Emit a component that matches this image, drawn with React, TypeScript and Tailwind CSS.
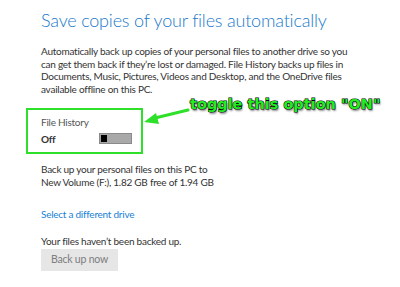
import React from 'react'

// ============================================================================
// FILE HISTORY - Save copies of your files automatically
// ============================================================================

const body = "font-['Lato',sans-serif] text-[10px] leading-[12.5px] tracking-[-0.25px]"

export default function App() {
  return (
    <div className="relative w-[400px] h-[287px] bg-white overflow-hidden">
      <div className="pl-[41px] pt-[8px] text-[#333333]">
        <h1 className="font-['Lato',sans-serif] font-light text-[18px] leading-[24px] tracking-[-0.2px] text-[#1979ca] whitespace-nowrap">
          Save copies of your files automatically
        </h1>

        <div className={`${body} mt-[13px] whitespace-nowrap`}>
          <p>Automatically back up copies of your personal files to another drive so you</p>
          <p>can get them back if they’re lost or damaged. File History backs up files in</p>
          <p>Documents, Music, Pictures, Videos and Desktop, and the OneDrive files</p>
          <p>available offline on this PC.</p>
        </div>

        <div className="ml-[-15px] mt-[13px] w-[117px] h-[46px] border-2 border-[#2fe02a] pl-[13px] pt-[6px]">
          <p className={`${body} text-[#555555]`}>File History</p>
          <div className="flex items-center mt-[4px]">
            <span className={`${body} font-bold w-[58px]`}>Off</span>
            <div className="flex w-[33px] h-[11px] border border-[#8a8a8a] bg-[#a9a9a9] p-px">
              <div className="w-[6px] h-full bg-black" />
            </div>
          </div>
        </div>

        <div className={`${body} mt-[9px] whitespace-nowrap`}>
          <p>Back up your personal files on this PC to</p>
          <p>New Volume (F:), 1.82 GB free of 1.94 GB</p>
        </div>

        <p className={`${body} mt-[20px] text-[#1a7fd6]`}>Select a different drive</p>

        <p className={`${body} mt-[14px]`}>Your files haven’t been backed up.</p>

        <div className="mt-[2px] w-[77px] h-[22px] bg-[#e6e6e6] flex items-center justify-center font-['Lato',sans-serif] text-[10.5px] tracking-[-0.2px] text-[#7d7d7d]">
          Back up now
        </div>
      </div>

      {/* annotation overlay */}
      <div className="absolute left-[190px] top-[95px] font-['DejaVu_Sans',sans-serif] font-bold text-[14.5px] leading-[18px] text-[#22ee22] whitespace-nowrap [-webkit-text-stroke:1.2px_black] [paint-order:stroke_fill] [text-shadow:1px_2px_2px_rgba(0,0,0,0.45)]">
        toggle this option "ON"
      </div>
      <svg className="absolute left-0 top-0" width="400" height="287" viewBox="0 0 400 287">
        <path d="M188 110 L155 118" stroke="#2fe02a" strokeWidth="3" strokeLinecap="round" />
        <path d="M144 122 L156 113 L159 124 Z" fill="#2fe02a" />
      </svg>
    </div>
  )
}
